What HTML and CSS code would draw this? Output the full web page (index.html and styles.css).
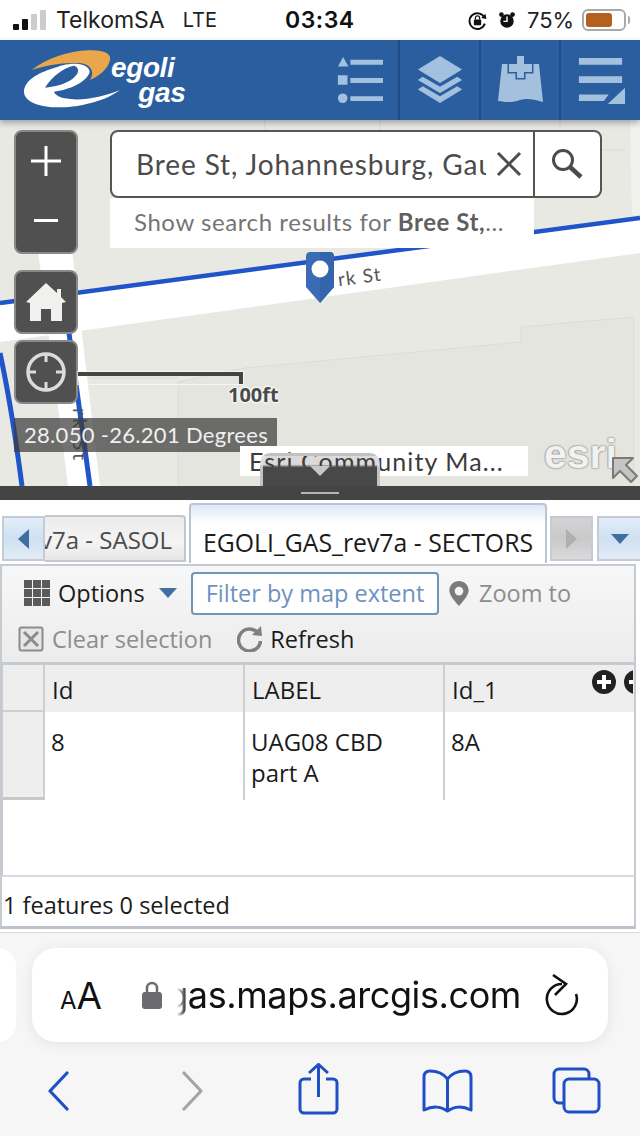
FILE: index.html
```html
<!DOCTYPE html>
<html lang="en">
<head>
  <meta charset="UTF-8" />
  <meta name="viewport" content="width=device-width, initial-scale=1.0"/>
  <title>Egoli Gas Map</title>
  <link rel="stylesheet" href="styles.css">
</head>
<body>
  <div class="phone">

    <!-- STATUS BAR -->
    <div class="status-bar">
      <div class="status-left">
        <div class="signal"><i class="on s1"></i><i class="on s2"></i><i class="s3"></i><i class="s4"></i></div>
        <span>TelkomSA</span>
        <span class="lte">LTE</span>
      </div>
      <div class="clock">03:34</div>
      <div class="status-right">
        <svg class="st-icon" viewBox="0 0 20 20">
          <path d="M16.500 7 A7.500 7.500 0 1 0 17 13" fill="none" stroke="#111" stroke-width="1.800"/>
          <path d="M13.500 7.500 L18.500 8.500 L17.500 3.500 Z" fill="#111"/>
          <rect x="6.500" y="9" width="7" height="5.500" rx="1" fill="#111"/>
          <path d="M8 9 V7.500 a2 2 0 0 1 4 0 V9" fill="none" stroke="#111" stroke-width="1.200"/>
        </svg>
        <svg class="st-icon alarm" viewBox="0 0 20 20">
          <circle cx="10" cy="11" r="7.500" fill="#111"/>
          <circle cx="3.800" cy="4" r="2.600" fill="#111"/>
          <circle cx="16.200" cy="4" r="2.600" fill="#111"/>
          <path d="M10 6 V11.500 H6" fill="none" stroke="#fff" stroke-width="1.600"/>
        </svg>
        <span class="pct">75%</span>
        <div class="battery"><div class="battery-fill"></div></div>
        <div class="battery-tip"></div>
      </div>
    </div>

    <!-- HEADER -->
    <div class="app-header">
      <div class="logo">
        <svg class="logo-mark" viewBox="0 0 345 225">
          <path d="M65 75 C110 40 175 18 235 16 C280 14 305 25 300 45 C295 70 270 92 240 105 C255 85 245 60 215 55 C165 50 110 60 65 75 Z" fill="#e9a64b"/>
          <path d="M130 70 C80 85 42 110 42 140 C42 170 90 188 150 187 C220 186 290 165 330 135 C280 155 215 170 165 160 C150 157 135 150 132 140 C175 135 225 115 238 85 C243 70 225 58 200 56 C170 55 150 62 130 70 Z" fill="#fff"/>
          <path d="M105 128 C125 95 160 68 192 62 C215 70 205 95 170 112 C150 122 125 127 105 128 Z" fill="#2a5e9f"/>
        </svg>
        <div class="logo-text"><span class="logo-egoli">egoli</span><span class="logo-gas">gas</span></div>
      </div>
      <div class="header-tools">
        <div class="tool">
          <svg viewBox="0 0 50 50" class="tool-icon">
            <path d="M3 11 L8.500 1 L14 11 Z M3 20 H13 V30 H3 Z" fill="#a3c0de"/>
            <circle cx="8" cy="44" r="5" fill="#a3c0de"/>
            <path d="M16 4 H50 V9 H16 Z M16 23 H50 V28 H16 Z M16 42 H50 V47 H16 Z" fill="#a3c0de"/>
          </svg>
        </div>
        <div class="tool">
          <svg viewBox="0 0 50 50" class="tool-icon">
            <path d="M25 0 L48 14 L25 28 L2 14 Z" fill="#a3c0de"/>
            <path d="M2 25 L7 21.500 L25 32 L43 21.500 L48 25 L25 38.500 Z" fill="#a3c0de"/>
            <path d="M2 35 L7 31.500 L25 42 L43 31.500 L48 35 L25 49 Z" fill="#a3c0de"/>
          </svg>
        </div>
        <div class="tool">
          <svg viewBox="0 0 45 48" class="tool-icon map-add">
            <path d="M4 8 H41 L45 46 C35 43 28 42 22 44 C14 47 8 46 0 45 Z" fill="#a3c0de"/>
            <path d="M19 0 H26 V8 H34 V16 H26 V22 H19 V16 H11 V8 H19 Z" fill="#a3c0de" stroke="#2a5e9f" stroke-width="3" paint-order="stroke"/>
          </svg>
        </div>
        <div class="tool">
          <svg viewBox="0 0 50 50" class="tool-icon">
            <path d="M2 2 H47 V9 H2 Z M2 21 H47 V28 H2 Z M2 40 H33 L28 47 H2 Z" fill="#a3c0de"/>
            <path d="M50 33 V50 H32 Z" fill="#a3c0de"/>
          </svg>
        </div>
      </div>
    </div>

    <!-- MAP -->
    <div class="map">
      <svg class="map-bg" viewBox="0 0 640 366">
        <rect width="640" height="366" fill="#e9e9e4"/>
        <path d="M178 366 V262 L245 248 L320 241 L521 222 V207 L634 197 V366 Z" fill="#e5e5e0"/>
        <path d="M178 366 V262 L245 248 L320 241 L521 222 V207 L634 197 V366" stroke="#dcdcd7" stroke-width="1" fill="none"/>
        <path d="M90 258 H178 M380 0 V30 M560 0 V30 M265 0 V110 M600 30 H625" stroke="#dededa" stroke-width="1.500" fill="none"/>
        <path d="M630 0 H640 V95 H632 Z" fill="#f1f1ee"/>
        <path d="M0 183 L640 98 L640 133 L0 222 Z" fill="#fff"/>
        <path d="M38 130 H72 L100 366 H68 Z" fill="#fff"/>
        <path d="M0 183 L640 98" stroke="#2055c9" stroke-width="4.500" fill="none"/>
        <path d="M69 213 L90 366" stroke="#2055c9" stroke-width="5" fill="none"/>
        <path d="M0 233 C8 270 16 320 22 366" stroke="#2055c9" stroke-width="5" fill="none"/>
        <text class="road-label" transform="rotate(-7.600 340 160)" x="338" y="166">rk St</text>
        <text class="road-label side" transform="rotate(90 73 288)" x="73" y="288">rk St</text>
      </svg>

      <div class="map-controls">
        <div class="zoom-box">
          <svg viewBox="0 0 32 32" class="zoom-icon"><path d="M14.500 1 H17.500 V14.500 H31 V17.500 H17.500 V31 H14.500 V17.500 H1 V14.500 H14.500 Z" fill="#fff"/></svg>
          <svg viewBox="0 0 32 8" class="zoom-minus"><rect width="24" height="3" x="4" y="2" fill="#fff"/></svg>
        </div>
        <div class="map-btn home-btn">
          <svg viewBox="0 0 40 38" class="btn-icon">
            <path d="M20 0 L31 10 V6 H35 V14 L40 19 L36 20 V38 H25 V26 H15 V38 H4 V20 L0 19 Z" fill="#f0f0ee"/>
          </svg>
        </div>
        <div class="map-btn locate-btn">
          <svg viewBox="0 0 40 40" class="btn-icon">
            <circle cx="20" cy="20" r="18" fill="none" stroke="#dcdcda" stroke-width="3.500"/>
            <path d="M20 2 V10 M20 30 V38 M2 20 H10 M30 20 H38" stroke="#dcdcda" stroke-width="3"/>
          </svg>
        </div>
      </div>

      <div class="search">
        <div class="search-box">
          <div class="search-text">Bree St, Johannesburg, Gauteng</div>
          <svg viewBox="0 0 26 26" class="clear-icon"><path d="M2 2 L24 24 M24 2 L2 24" stroke="#4b4b4b" stroke-width="3" fill="none"/></svg>
          <div class="search-btn">
            <svg viewBox="0 0 32 32" class="search-icon">
              <circle cx="12" cy="12" r="9.500" fill="none" stroke="#4b4b4b" stroke-width="3"/>
              <path d="M19 19 L30 29" stroke="#4b4b4b" stroke-width="4.500"/>
            </svg>
          </div>
        </div>
        <div class="suggest">Show search results for <b>Bree St,</b>...</div>
      </div>

      <svg viewBox="0 0 30 54" class="pin">
        <path d="M5 1 H25 Q29 1 29 6 V36 L15 52 L1 36 V6 Q1 1 5 1 Z" fill="#3a6cb5"/>
        <path d="M15 1 H25 Q29 1 29 6 V36 L15 52 Z" fill="#3365ad"/>
        <circle cx="15" cy="18" r="8.500" fill="#fff"/>
      </svg>

      <div class="scale-bar"></div>
      <div class="scale-label">100ft</div>
      <div class="coords">28.050 -26.201 Degrees</div>
      <div class="attribution">Esri Community Ma...</div>
      <div class="esri-logo">esri</div>
      <svg viewBox="0 0 28 28" class="resize-cursor">
        <path d="M2 2 H22 L15 9 L26 20 L20 26 L9 15 L2 22 Z" fill="#c4c4c2" stroke="#7a7a78" stroke-width="2" stroke-linejoin="round"/>
      </svg>
      <div class="collapse-tab"><div class="collapse-arrow"></div></div>
    </div>

    <div class="splitter"><div class="splitter-grip"></div></div>

    <!-- TABS -->
    <div class="tabs">
      <div class="tab-nav prev"><div class="tri-left"></div></div>
      <div class="tab tab-off"><span>v7a - SASOL</span></div>
      <div class="tab tab-on">EGOLI_GAS_rev7a - SECTORS</div>
      <div class="tab-nav next"><div class="tri-right"></div></div>
      <div class="tab-nav menu"><div class="tri-down"></div></div>
    </div>

    <!-- TOOLBAR -->
    <div class="toolbar">
      <div class="toolbar-row">
        <div class="options-grid"><i></i><i></i><i></i><i></i><i></i><i></i><i></i><i></i><i></i></div>
        <span class="options-label">Options</span>
        <div class="tri-down small"></div>
        <div class="filter-btn">Filter by map extent</div>
        <svg viewBox="0 0 20 26" class="zoom-pin">
          <path fill-rule="evenodd" d="M10 0 C4.500 0 0 4 0 10 C0 16 10 26 10 26 C10 26 20 16 20 10 C20 4 15.500 0 10 0 Z M10 6 A4.500 4.500 0 1 1 10 15 A4.500 4.500 0 1 1 10 6 Z" fill="#7b7b7b"/>
        </svg>
        <span class="muted">Zoom to</span>
      </div>
      <div class="toolbar-row second">
        <svg viewBox="0 0 26 26" class="clear-sel">
          <rect x="1.500" y="1.500" width="23" height="23" rx="2" fill="#e6e6e6" stroke="#8b8b8b" stroke-width="2"/>
          <path d="M6 6 L20 20 M20 6 L6 20" stroke="#8b8b8b" stroke-width="3"/>
        </svg>
        <span class="muted clear-label">Clear selection</span>
        <svg viewBox="0 0 26 26" class="refresh">
          <path d="M21 7 A11 11 0 1 0 23.500 15" fill="none" stroke="#808080" stroke-width="3.500"/>
          <path d="M15 9 L25 10 L24 0 Z" fill="#808080"/>
        </svg>
        <span>Refresh</span>
      </div>
    </div>

    <!-- TABLE -->
    <div class="grid-wrap">
      <div class="grid-head">
        <div class="cell-sel"></div>
        <div class="cell col-id">Id</div>
        <div class="cell col-label">LABEL</div>
        <div class="cell col-id1">Id_1</div>
        <div class="col-btns">
          <svg viewBox="0 0 24 24" class="col-btn"><circle cx="12" cy="12" r="12" fill="#222"/><path d="M10 5 H14 V10 H19 V14 H14 V19 H10 V14 H5 V10 H10 Z" fill="#fff"/></svg>
          <svg viewBox="0 0 24 24" class="col-btn"><circle cx="12" cy="12" r="12" fill="#222"/><path d="M5 10 H19 V14 H5 Z" fill="#fff"/></svg>
        </div>
      </div>
      <div class="grid-row">
        <div class="cell-sel body"></div>
        <div class="cell col-id">8</div>
        <div class="cell col-label">UAG08 CBD<br>part A</div>
        <div class="cell col-id1">8A</div>
      </div>
    </div>
    <div class="grid-footer">1 features 0 selected</div>

    <!-- SAFARI -->
    <div class="safari">
      <div class="url-row">
        <div class="url-prev"></div>
        <div class="url-bar">
          <span class="aa"><small>A</small>A</span>
          <svg viewBox="0 0 20 30" class="lock">
            <path d="M5 14 V8 a5 5 0 0 1 10 0 V14" fill="none" stroke="#6a6a70" stroke-width="2.500"/>
            <rect y="12" width="20" height="17" rx="3" fill="#6a6a70"/>
          </svg>
          <div class="url-text"><span>gas.maps.arcgis.com</span></div>
          <svg viewBox="0 0 34 42" class="reload">
            <path d="M17 10 A15 15 0 1 0 31 20" fill="none" stroke="#111" stroke-width="2.600"/>
            <path d="M8 1 L21 10 L10 21" fill="none" stroke="#111" stroke-width="2.600"/>
          </svg>
        </div>
      </div>
      <div class="safari-nav">
        <svg viewBox="0 0 22 40" class="nav-icon back"><path d="M20 2 L3 20 L20 38" fill="none" stroke="#1f4fc4" stroke-width="3.200" stroke-linecap="round" stroke-linejoin="round"/></svg>
        <svg viewBox="0 0 22 40" class="nav-icon fwd"><path d="M2 2 L19 20 L2 38" fill="none" stroke="#a4a4a6" stroke-width="3.200" stroke-linecap="round" stroke-linejoin="round"/></svg>
        <svg viewBox="0 0 41 52" class="nav-icon share">
          <path d="M13 16 H6 A4 4 0 0 0 2 20 V46 A4 4 0 0 0 6 50 H35 A4 4 0 0 0 39 46 V20 A4 4 0 0 0 35 16 H28" fill="none" stroke="#1f4fc4" stroke-width="3"/>
          <path d="M20.500 34 V2 M11 10 L20.500 1.500 L30 10" fill="none" stroke="#1f4fc4" stroke-width="3"/>
        </svg>
        <svg viewBox="0 0 51 44" class="nav-icon book">
          <path d="M25.500 10 C21 4 14 2 8 2 C4 2 2 4 2 8 V41 C10 37 19 37 25.500 42 C32 37 41 37 49 41 V8 C49 4 47 2 43 2 C37 2 30 4 25.500 10 Z M25.500 10 V42" fill="none" stroke="#1f4fc4" stroke-width="3" stroke-linejoin="round"/>
        </svg>
        <svg viewBox="0 0 49 47" class="nav-icon pages">
          <path d="M12 36 H7 A5 5 0 0 1 2 31 V7 A5 5 0 0 1 7 2 H32 A5 5 0 0 1 37 7 V12" fill="none" stroke="#1f4fc4" stroke-width="3"/>
          <rect x="12" y="12" width="35" height="33" rx="5" fill="none" stroke="#1f4fc4" stroke-width="3"/>
        </svg>
      </div>
    </div>
  </div>
</body>
</html>
```

FILE: styles.css
```css
* {
  box-sizing: border-box;
}

html, body {
  margin: 0;
  padding: 0;
  background: #fff;
}

.phone {
  width: 640px;
  height: 1136px;
  display: flex;
  flex-direction: column;
  overflow: hidden;
  font-family: "Open Sans", sans-serif;
  color: #111;
}

/* STATUS BAR */
.status-bar {
  height: 40px;
  flex: none;
  background: #fff;
  display: flex;
  align-items: center;
  padding: 0 10px 0 13px;
  font-family: Inter, "Liberation Sans", sans-serif;
  font-size: 23px;
  color: #222;
}

.status-left {
  display: flex;
  align-items: center;
  gap: 10px;
  width: 270px;
}

.lte {
  margin-left: 8px;
  font-size: 20px;
}

.signal {
  display: flex;
  align-items: flex-end;
  gap: 3px;
  height: 20px;
}

.signal i {
  width: 6px;
  background: #ccc;
  border-radius: 1px;
}

.signal .on {
  background: #111;
}

.s1 { height: 6px; }
.s2 { height: 11px; }
.s3 { height: 16px; }
.s4 { height: 20px; }

.clock {
  width: 80px;
  margin-left: 2px;
  font-weight: 600;
  font-size: 23px;
  letter-spacing: 0.5px;
  color: #111;
}

.status-right {
  margin-left: auto;
  display: flex;
  align-items: center;
}

.st-icon {
  width: 21px;
  height: 21px;
  margin-right: 10px;
}

.alarm {
  width: 18px;
  height: 20px;
  margin-right: 11px;
}

.pct {
  width: 48px;
  font-size: 22px;
  margin-right: 7px;
  white-space: nowrap;
}

.battery {
  width: 44px;
  height: 22px;
  border: 2px solid #aaa;
  border-radius: 6px;
  padding: 2px;
}

.battery-fill {
  width: 26px;
  height: 14px;
  background: #b5601f;
  border-radius: 3px;
}

.battery-tip {
  width: 2px;
  height: 8px;
  background: #aaa;
  margin-left: 2px;
  border-radius: 0 2px 2px 0;
}

/* HEADER */
.app-header {
  height: 80px;
  flex: none;
  background: #2a5e9f;
  display: flex;
  justify-content: space-between;
  box-shadow: 0 3px 6px rgba(0, 0, 0, 0.3);
  position: relative;
  z-index: 2;
}

.logo {
  display: flex;
  padding: 5px 0 0 10px;
}

.logo-mark {
  width: 115px;
  height: 75px;
  flex: none;
}

.logo-text {
  display: flex;
  flex-direction: column;
  align-items: flex-end;
  margin: 10px 0 0 -14px;
  font-family: "Liberation Sans", sans-serif;
  font-weight: bold;
  font-style: italic;
  color: #fff;
  font-size: 28px;
  letter-spacing: -0.4px;
  line-height: 25px;
}

.logo-gas {
  margin-right: -11px;
}

.header-tools {
  display: flex;
}

.tool {
  width: 80px;
  display: flex;
  justify-content: center;
  align-items: center;
  border-left: 2px solid #214d84;
}

.tool:first-child {
  width: 78px;
  border-left: none;
}

.tool:nth-child(2), .tool:last-child {
  width: 81px;
}

.tool-icon {
  width: 48px;
  height: 48px;
}

.map-add {
  width: 45px;
}

/* MAP */
.map {
  height: 366px;
  flex: none;
  position: relative;
  overflow: hidden;
  background: #e9e9e4;
}

.map-bg {
  position: absolute;
  inset: 0;
  width: 640px;
  height: 366px;
}

.road-label {
  font-family: Lato, sans-serif;
  font-size: 19px;
  letter-spacing: 1.2px;
  fill: #555;
}

.road-label.side {
  font-size: 20px;
  letter-spacing: 3px;
}

.map-controls {
  position: absolute;
  left: 14px;
  top: 10px;
  display: flex;
  flex-direction: column;
}

.zoom-box, .map-btn {
  width: 64px;
  background: #505050;
  border: 2px solid #888;
  border-radius: 8px;
  display: flex;
  align-items: center;
  justify-content: center;
}

.zoom-box {
  height: 124px;
  flex-direction: column;
  justify-content: flex-start;
  gap: 40px;
  padding-top: 13px;
}

.zoom-icon {
  width: 32px;
  height: 32px;
}

.zoom-minus {
  width: 32px;
  height: 8px;
}

.map-btn {
  height: 64px;
}

.home-btn {
  margin-top: 16px;
}

.locate-btn {
  margin-top: 6px;
}

.btn-icon {
  width: 40px;
  height: 40px;
}

.search {
  position: absolute;
  left: 110px;
  top: 10px;
  font-family: Lato, sans-serif;
}

.search-box {
  width: 492px;
  height: 68px;
  background: #fff;
  border: 2px solid #555;
  border-radius: 8px;
  display: flex;
  align-items: center;
  color: #4b4b4b;
}

.search-text {
  width: 350px;
  margin-left: 24px;
  font-size: 28px;
  letter-spacing: 0.9px;
  white-space: nowrap;
  overflow: hidden;
}

.clear-icon {
  width: 26px;
  height: 26px;
  margin-left: 10px;
}

.search-btn {
  margin-left: 11px;
  width: 66px;
  height: 64px;
  border-left: 2px solid #555;
  display: flex;
  align-items: center;
  justify-content: center;
}

.search-icon {
  width: 32px;
  height: 32px;
}

.suggest {
  width: 424px;
  height: 50px;
  background: #fff;
  color: #757575;
  font-size: 24px;
  padding: 9px 0 0 24px;
  white-space: nowrap;
  letter-spacing: 0.58px;
}

.suggest b {
  color: #5f5f5f;
}

.pin {
  position: absolute;
  left: 305px;
  top: 131px;
  width: 30px;
  height: 54px;
}

.scale-bar {
  position: absolute;
  left: 78px;
  top: 252px;
  width: 165px;
  height: 12px;
  border-top: 4px solid #444;
  border-right: 4px solid #444;
  outline: 1px solid rgba(255, 255, 255, 0.6);
}

.scale-label {
  position: absolute;
  left: 228px;
  top: 261px;
  font-family: "Open Sans", sans-serif;
  font-weight: bold;
  font-size: 20px;
  color: #4a4a4a;
  text-shadow: 0 0 3px #fff, 0 0 3px #fff, 0 0 3px #fff;
}

.coords {
  position: absolute;
  left: 14px;
  top: 298px;
  width: 263px;
  height: 34px;
  background: rgba(60, 60, 60, 0.72);
  color: #f0f0f0;
  font-family: Lato, sans-serif;
  font-size: 22px;
  line-height: 33px;
  padding-left: 10px;
  letter-spacing: 0.3px;
  white-space: nowrap;
}

.attribution {
  position: absolute;
  left: 240px;
  top: 326px;
  width: 288px;
  height: 30px;
  background: #fff;
  color: #3c3c3c;
  font-family: Lato, sans-serif;
  font-size: 25px;
  line-height: 30px;
  padding-left: 9px;
  letter-spacing: 1.1px;
  white-space: nowrap;
}

.esri-logo {
  position: absolute;
  left: 544px;
  top: 311px;
  font-family: "Liberation Sans", sans-serif;
  font-weight: bold;
  font-size: 41px;
  color: #f2f2f0;
  text-shadow: 0 0 2px #777, 0 0 2px #999;
}

.resize-cursor {
  position: absolute;
  left: 611px;
  top: 336px;
  width: 28px;
  height: 28px;
}

.collapse-tab {
  position: absolute;
  left: 260px;
  top: 333px;
  width: 120px;
  height: 33px;
  background: linear-gradient(rgba(70, 70, 70, 0.2) 28%, #484848 38%);
  border: 3px solid rgba(225, 225, 225, 0.8);
  border-bottom: none;
  border-radius: 10px 10px 0 0;
  display: flex;
  justify-content: center;
}

.collapse-arrow {
  width: 0;
  height: 0;
  margin-top: 10px;
  border-left: 10px solid transparent;
  border-right: 10px solid transparent;
  border-top: 10px solid #c8c8c8;
}

.splitter {
  height: 14px;
  flex: none;
  background: #444;
  display: flex;
  justify-content: center;
  padding-top: 6px;
}

.splitter-grip {
  width: 38px;
  height: 2px;
  background: #b5b5b5;
}

/* TABS */
.tabs {
  height: 64px;
  flex: none;
  background: #fff;
  display: flex;
  align-items: flex-end;
  padding-bottom: 3px;
}

.tab {
  white-space: nowrap;
}

.tab-nav {
  height: 45px;
  display: flex;
  align-items: center;
  justify-content: center;
  background: linear-gradient(#e2edf8, #cfe0f2 50%, #e3ecf5);
  border: 2px solid #c3ccd6;
}

.prev {
  width: 43px;
  margin-left: 2px;
}

.tab-off {
  width: 141px;
  height: 47px;
  margin-bottom: -1px;
  background: linear-gradient(#ececec, #f4f4f4 60%, #e6e6e6);
  border: 2px solid #c4c8ce;
  border-left: none;
  border-radius: 0 4px 0 0;
  color: #4b4b4b;
  font-size: 24px;
  display: flex;
  justify-content: flex-end;
  align-items: center;
  padding: 2px 12px 0 0;
  overflow: hidden;
}

.tab-on {
  width: 358px;
  height: 60px;
  margin-left: 3px;
  margin-bottom: -2px;
  border: 2px solid #b9c4d2;
  border-bottom: none;
  border-radius: 4px 4px 0 0;
  background: linear-gradient(#dce8f6, #fff 30%);
  text-align: center;
  padding-top: 20px;
  line-height: 34px;
  color: #1b1b1b;
  font-size: 24.800px;
}

.next {
  width: 43px;
  margin-left: 3px;
  background: linear-gradient(#d4d4d4, #c9c9c9 50%, #dadada);
}

.menu {
  flex: 1;
  margin-left: 4px;
  border-right: none;
}

.tri-left {
  border-top: 10px solid transparent;
  border-bottom: 10px solid transparent;
  border-right: 11px solid #3f6ea0;
}

.tri-right {
  border-top: 10px solid transparent;
  border-bottom: 10px solid transparent;
  border-left: 11px solid #b0b0b0;
}

.tri-down {
  border-left: 9px solid transparent;
  border-right: 9px solid transparent;
  border-top: 10px solid #3f6ea0;
}

/* TOOLBAR */
.toolbar {
  height: 101px;
  flex: none;
  margin-right: 4px;
  background: linear-gradient(#f7f7f7, #ececec);
  border-left: 2px solid #c6cbd2;
  border-right: 2px solid #c6cbd2;
  border-top: 2px solid #c6cbd2;
  border-bottom: 3px solid #c6cbd2;
  font-size: 23.500px;
  padding-top: 3px;
}

.toolbar-row {
  display: flex;
  align-items: center;
  height: 48px;
  padding-left: 22px;
  color: #1b1b1b;
}

.toolbar-row.second {
  height: 44px;
  padding-left: 16px;
}

.options-grid {
  display: grid;
  grid-template-columns: repeat(3, 8px);
  grid-auto-rows: 8px;
  gap: 1px;
  margin-right: 8px;
}

.options-grid i {
  background: #5a5a5a;
}

.options-label {
  width: 101px;
}

.tri-down.small {
  margin-right: 14px;
}

.filter-btn {
  width: 248px;
  height: 43px;
  background: #fff;
  border: 2px solid #6f94bd;
  border-radius: 4px;
  color: #6d92bd;
  text-align: center;
  line-height: 39px;
  white-space: nowrap;
}

.zoom-pin {
  width: 22px;
  height: 25px;
  margin-left: 9px;
  margin-right: 9px;
}

.muted {
  color: #8d8d8d;
}

.clear-sel {
  width: 26px;
  height: 26px;
  margin-right: 8px;
}

.clear-label {
  margin-right: 25px;
}

.refresh {
  width: 26px;
  height: 26px;
  margin-right: 7px;
}

/* TABLE */
.grid-wrap {
  height: 212px;
  flex: none;
  margin-right: 4px;
  background: #fff;
  border-left: 3px solid #c6cbd2;
  border-right: 2px solid #c6cbd2;
  border-bottom: 2px solid #d8dade;
  font-size: 24px;
  color: #1b1b1b;
}

.grid-head, .grid-row {
  display: flex;
  position: relative;
}

.grid-head {
  height: 47px;
  background: #eeeeee;
  line-height: 50px;
}

.grid-row {
  height: 88px;
  line-height: 31px;
}

.cell-sel {
  width: 42px;
  background: #eeeeee;
  border-right: 2px solid #cfcfcf;
  border-bottom: 2px solid #cfcfcf;
}

.cell-sel.body {
  border-bottom: 3px solid #c8c8c8;
}

.cell {
  padding: 0 0 0 7px;
  border-right: 2px solid #cfcfcf;
}

.grid-row .cell {
  padding-top: 14px;
  padding-left: 6px;
}

.col-id {
  width: 200px;
}

.col-label {
  width: 200px;
}

.col-id1 {
  border-right: none;
  flex: 1;
}

.col-btns {
  position: absolute;
  left: 589px;
  top: 5px;
  width: 41px;
  display: flex;
  gap: 8px;
  overflow: hidden;
}

.col-btn {
  width: 24px;
  height: 24px;
  flex: none;
}

.grid-footer {
  height: 52px;
  flex: none;
  margin-right: 4px;
  background: #fff;
  border-left: 2px solid #c6cbd2;
  border-right: 2px solid #c6cbd2;
  border-bottom: 3px solid #bcc2cc;
  font-size: 23.500px;
  padding-top: 4px;
  line-height: 48px;
  padding-left: 1px;
  color: #1b1b1b;
}

/* SAFARI */
.safari {
  flex: 1;
  margin-top: 3px;
  background: #f6f6f6;
  border-top: 1px solid #d7dae0;
  overflow: hidden;
}

.url-row {
  display: flex;
  margin-top: 15px;
  gap: 16px;
  margin-left: -32px;
}

.url-prev {
  width: 48px;
  height: 94px;
  flex: none;
  background: #fff;
  border-radius: 0 18px 18px 0;
}

.url-bar {
  width: 576px;
  height: 94px;
  flex: none;
  background: #fff;
  border-radius: 24px;
  box-shadow: 0 2px 14px rgba(0, 0, 0, 0.08);
  display: flex;
  align-items: center;
  padding-left: 28px;
  font-family: Inter, "Liberation Sans", sans-serif;
  color: #111;
}

.aa {
  font-size: 37px;
  width: 53px;
  margin-right: 29px;
  white-space: nowrap;
}

.aa small {
  font-size: 24px;
}

.lock {
  width: 20px;
  height: 30px;
  margin-right: 15px;
}

.url-text {
  width: 344px;
  margin-right: 24px;
  display: flex;
  justify-content: flex-end;
  overflow: hidden;
  font-size: 36px;
  letter-spacing: -0.4px;
  white-space: nowrap;
  -webkit-mask-image: linear-gradient(to right, transparent, #000 10px);
  mask-image: linear-gradient(to right, transparent, #000 10px);
}

.url-text span {
  flex: none;
}

.reload {
  width: 34px;
  height: 42px;
  flex: none;
}

.safari-nav {
  display: flex;
  align-items: flex-start;
  padding-left: 47px;
}

.nav-icon {
  flex: none;
}

.back {
  width: 22px;
  height: 40px;
  margin-top: 29px;
}

.fwd {
  width: 22px;
  height: 40px;
  margin-left: 113px;
  margin-top: 29px;
}

.share {
  width: 41px;
  height: 52px;
  margin-left: 94px;
  margin-top: 21px;
}

.book {
  width: 51px;
  height: 44px;
  margin-left: 83px;
  margin-top: 27px;
}

.pages {
  width: 49px;
  height: 47px;
  margin-left: 79px;
  margin-top: 25px;
}
```
